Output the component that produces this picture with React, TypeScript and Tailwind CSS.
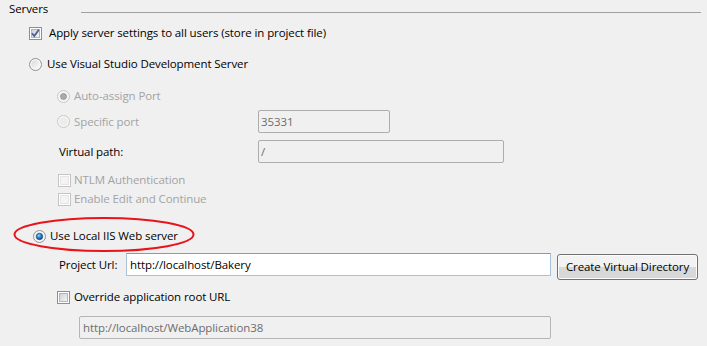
import React from 'react';

const font = { fontFamily: '"Open Sans", "Noto Sans", Arial, sans-serif' };

type BoxProps = { checked?: boolean; disabled?: boolean };

const CheckBox: React.FC<BoxProps> = ({ checked, disabled }) => (
  <svg width="13" height="13" viewBox="0 0 13 13" className="shrink-0">
    <defs>
      <linearGradient id={disabled ? 'cbd' : 'cbe'} x1="0" y1="0" x2="1" y2="1">
        <stop offset="0" stopColor={disabled ? '#f4f4f4' : '#cbcfd5'} />
        <stop offset="1" stopColor={disabled ? '#f4f4f4' : '#f6f6f6'} />
      </linearGradient>
    </defs>
    <rect x="0.5" y="0.5" width="12" height="12" fill="#fff" stroke={disabled ? '#c4c4c4' : '#8e8f8f'} />
    <rect x="2.5" y="2.5" width="8" height="8" fill={`url(#${disabled ? 'cbd' : 'cbe'})`} stroke={disabled ? '#e6e6e6' : '#b3b5b8'} />
    {checked && <path d="M3 6.2 L5.3 9 L9.8 2.8" fill="none" stroke="#4a5f97" strokeWidth="1.8" />}
  </svg>
);

const Radio: React.FC<BoxProps> = ({ checked, disabled }) => (
  <svg width="13" height="13" viewBox="0 0 13 13" className="shrink-0">
    <defs>
      <radialGradient id="rdot" cx="0.4" cy="0.35" r="0.7">
        <stop offset="0" stopColor="#9fd6ff" />
        <stop offset="0.45" stopColor="#2a8ad4" />
        <stop offset="1" stopColor="#0b3f75" />
      </radialGradient>
      <linearGradient id="rfill" x1="0" y1="0" x2="1" y2="1">
        <stop offset="0" stopColor="#d8d9db" />
        <stop offset="1" stopColor="#fbfbfb" />
      </linearGradient>
    </defs>
    <circle cx="6.5" cy="6.5" r="6" fill="#f8f8f8" stroke={disabled ? '#c6c6c6' : '#8e8f8f'} />
    <circle cx="6.5" cy="6.5" r="4.3" fill={disabled ? '#ececec' : 'url(#rfill)'} />
    {checked && disabled && <circle cx="6.5" cy="6.5" r="3" fill="#a9a9a9" stroke="#8d8d8d" strokeWidth="0.6" />}
    {checked && !disabled && <circle cx="6.5" cy="6.5" r="3.2" fill="url(#rdot)" stroke="#1b3f66" strokeWidth="0.6" />}
  </svg>
);

export default function App() {
  return (
    <div className="w-[707px] h-[346px] bg-[#f0f0f0] text-[11.5px] tracking-[-0.1px] text-black overflow-hidden" style={font}>
      <div className="relative flex flex-col">
        {/* Group header */}
        <div className="flex h-[18px] items-center">
          <span className="ml-[9px] leading-none">Servers</span>
          <div className="ml-[33px] mr-[6px] mt-[6px] h-px flex-1 bg-[#a0a0a0]" />
        </div>

        <div className="mt-[6px] flex h-[18px] items-center pl-[29px]">
          <CheckBox checked />
          <span className="ml-[7px]">Apply server settings to all users (store in project file)</span>
        </div>

        <div className="mt-[13px] flex h-[18px] items-center pl-[29px]">
          <Radio />
          <span className="ml-[5px]">Use Visual Studio Development Server</span>
        </div>

        <div className="mt-[14px] flex h-[18px] items-center pl-[57px] text-[#a3a3a3]">
          <Radio checked disabled />
          <span className="ml-[4px]">Auto-assign Port</span>
        </div>

        <div className="mt-[5px] flex h-[23px] items-center pl-[57px] text-[#a3a3a3]">
          <Radio disabled />
          <span className="ml-[4px] w-[184px]">Specific port</span>
          <div className="flex h-[23px] w-[132px] items-center rounded-[2px] border border-[#adadad] bg-[#f0f0f0] px-[2px] text-[#6d6d6d]">
            35331
          </div>
        </div>

        <div className="mt-[7px] flex h-[23px] items-center pl-[59px]">
          <span className="w-[199px]">Virtual path:</span>
          <div className="flex h-[23px] w-[246px] items-center rounded-[2px] border border-[#adadad] bg-[#f0f0f0] px-[2px] text-[#6d6d6d]">
            /
          </div>
        </div>

        <div className="mt-[8px] flex h-[18px] items-center pl-[58px] text-[#a3a3a3]">
          <CheckBox disabled />
          <span className="ml-[3px]">NTLM Authentication</span>
        </div>

        <div className="mt-[1px] flex h-[18px] items-center pl-[58px] text-[#a3a3a3]">
          <CheckBox disabled />
          <span className="ml-[3px]">Enable Edit and Continue</span>
        </div>

        <div className="mt-[19px] flex h-[18px] items-center pl-[33px]">
          <Radio checked />
          <span className="ml-[4px]">Use Local IIS Web server</span>
        </div>

        <div className="mt-[8px] flex h-[27px] items-start pl-[59px]">
          <span className="flex h-[23px] w-[67px] items-center">Project Url:</span>
          <div className="flex h-[23px] w-[425px] items-center border border-[#a8c2dc] border-t-[#7f9db9] bg-white px-[3px]">
            http://localhost/Bakery
          </div>
          <button className="ml-[6px] mt-px h-[26px] w-[141px] rounded-[3px] border border-[#707070] bg-gradient-to-b from-[#f2f2f2] from-50% to-[#d8d8d8] to-50% text-[11.5px] tracking-[-0.1px] text-black shadow-[inset_0_0_0_1px_#fcfcfc]">
            Create Virtual Directory
          </button>
        </div>

        <div className="mt-[8px] flex h-[18px] items-center pl-[57px]">
          <CheckBox />
          <span className="ml-[4px]">Override application root URL</span>
        </div>

        <div className="mt-[10px] flex h-[23px] items-center pl-[79px]">
          <div className="flex h-[23px] w-[472px] items-center rounded-[2px] border border-[#b5b5b5] bg-[#f0f0f0] px-[3px] text-[#6d6d6d]">
            http://localhost/WebApplication38
          </div>
        </div>

        {/* red annotation ellipse */}
        <svg className="pointer-events-none absolute left-[13px] top-[216px]" width="182" height="37" viewBox="0 0 182 37">
          <ellipse cx="91" cy="18.5" rx="89.5" ry="16.5" fill="none" stroke="#e8141b" strokeWidth="2" />
        </svg>
      </div>
    </div>
  );
}
